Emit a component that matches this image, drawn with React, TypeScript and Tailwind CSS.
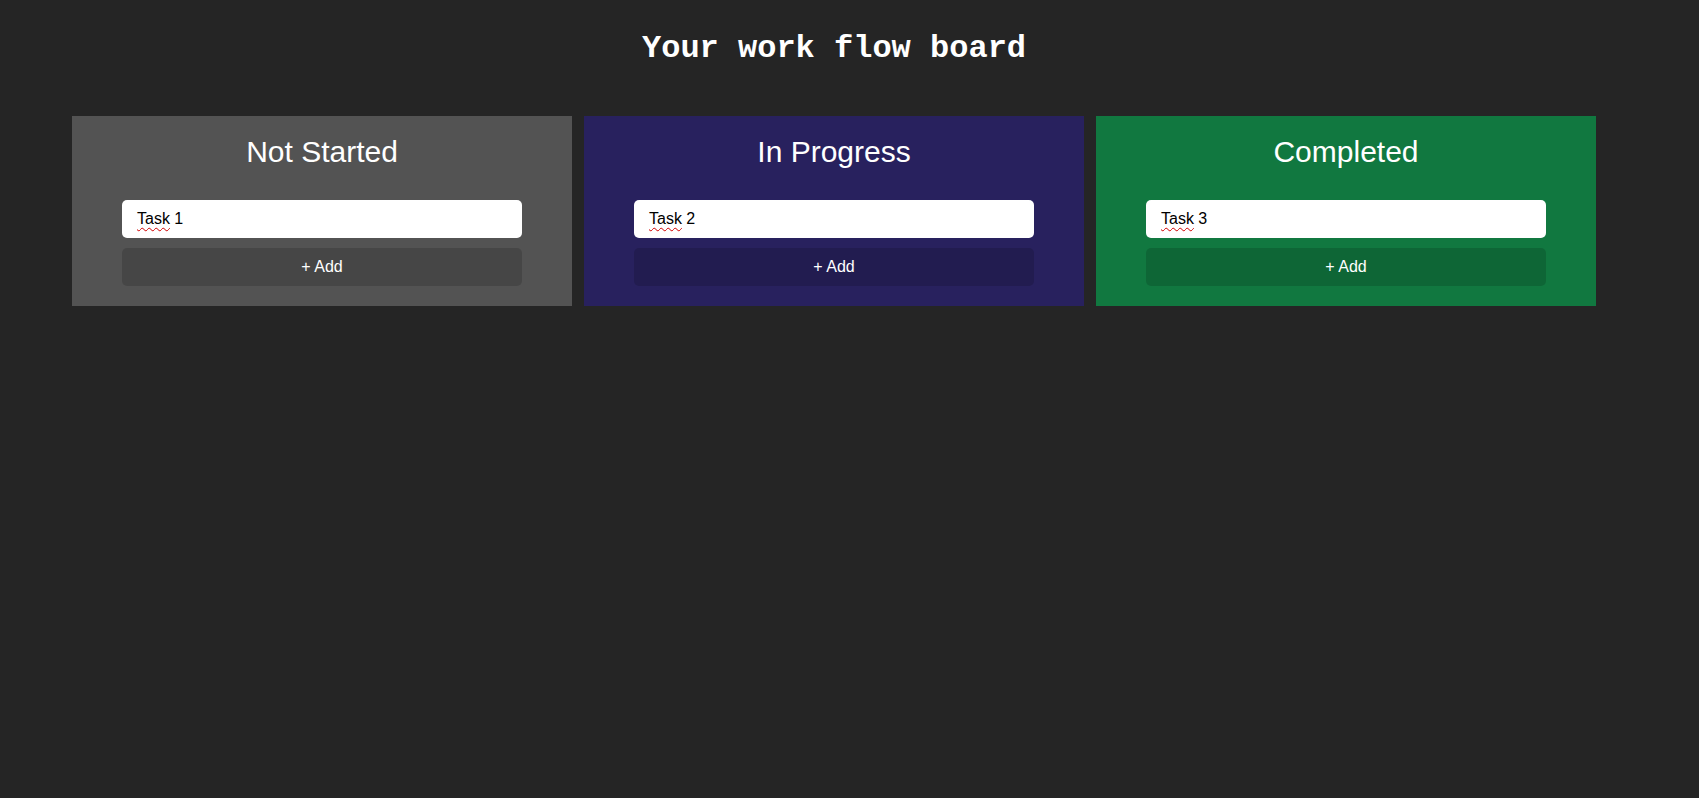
import React from "react";

const columns = [
  { title: "Not Started", task: "1", bg: "bg-[#535353]" },
  { title: "In Progress", task: "2", bg: "bg-[#28215e]" },
  { title: "Completed", task: "3", bg: "bg-[#117840]" },
];

export default function App() {
  return (
    <div className="min-h-[798px] w-full bg-[#252525] font-['Liberation_Sans',Arial,sans-serif]">
      <div className="ml-[72px] w-[1524px] flex flex-col items-center">
        <h1 className="mt-[31px] text-[32px] leading-[36px] font-bold text-white font-['Liberation_Mono','Courier_New',monospace]">
          Your work flow board
        </h1>
        <div className="mt-[49px] flex gap-[12px] w-full">
          {columns.map((c) => (
            <div
              key={c.title}
              className={`${c.bg} w-[500px] h-[190px] flex flex-col items-center pt-[19px]`}
            >
              <h2 className="text-[30px] leading-[34px] text-white font-normal">
                {c.title}
              </h2>
              <div className="mt-[31px] w-[400px] h-[38px] bg-white rounded-[5px] flex items-center pl-[15px] text-[16px] text-black">
                <span className="underline decoration-wavy decoration-[#d00000] decoration-1 underline-offset-[3px]">
                  Task
                </span>
                <span>&nbsp;{c.task}</span>
              </div>
              <button className="mt-[10px] w-[400px] h-[38px] rounded-[5px] bg-black/15 text-white text-[16px] flex items-center justify-center">
                + Add
              </button>
            </div>
          ))}
        </div>
      </div>
    </div>
  );
}
